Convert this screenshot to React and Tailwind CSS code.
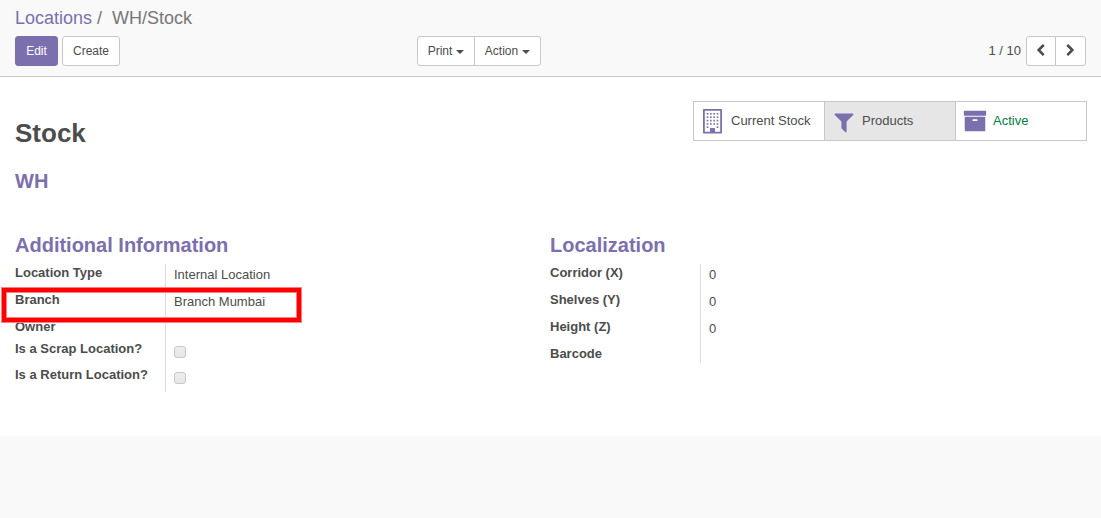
import React from "react";

const PATHS = {
  left: "M1427 301l-531 531 531 531q19 19 19 45t-19 45l-166 166q-19 19-45 19t-45-19l-742-742q-19-19-19-45t19-45l742-742q19-19 45-19t45 19l166 166q19 19 19 45t-19 45z",
  right: "M1363 877l-742 742q-19 19-45 19t-45-19l-166-166q-19-19-19-45t19-45l531-531-531-531q-19-19-19-45t19-45l166-166q19-19 45-19t45 19l742 742q19 19 19 45t-19 45z",
  filter: "M1595 295q17 41-14 70l-493 493v742q0 42-39 59-13 5-25 5-27 0-45-19l-256-256q-19-19-19-45v-486l-493-493q-31-29-14-70 17-39 59-39h1280q42 0 59 39z",
  archive: "M1088 832q0-26-19-45t-45-19h-256q-26 0-45 19t-19 45 19 45 45 19h256q26 0 45-19t19-45zm576-192v960q0 26-19 45t-45 19h-1408q-26 0-45-19t-19-45v-960q0-26 19-45t45-19h1408q26 0 45 19t19 45zm64-448v256q0 26-19 45t-45 19h-1536q-26 0-45-19t-19-45v-256q0-26 19-45t45-19h1536q26 0 45 19t19 45z",
};

const WINDOW_ROWS = [4, 7.4, 10.8, 14.2];
const WINDOW_COLUMNS = [4.5, 7.8, 11.2, 14.5];

function Icon({ name, className }) {
  return (
    <svg viewBox="0 0 1792 1792" className={className} fill="currentColor">
      <path d={PATHS[name]} />
    </svg>
  );
}

function Pane({ x, y }) {
  return <rect x={x - 0.85} y={y} width="1.7" height="1.6" />;
}

function Building() {
  return (
    <svg viewBox="0 0 19 25" className="h-[25px] w-[19px]" fill="currentColor">
      <path fillRule="evenodd" d="M.8 0h17.4q.8 0 .8.8v23q0 .8-.8.8H.8q-.8 0-.8-.8V.8Q0 0 .8 0zM1.8 1.8v21H7v-3.1q0-.5.5-.5h4q.5 0 .5.5v3.1h5.2v-21z" />
      <path d="M7 19.2h5v4H7z" />
      {WINDOW_ROWS.map((y) => WINDOW_COLUMNS.map((x) => <Pane key={`${x}-${y}`} x={x} y={y} />))}
      <Pane x={4.5} y={17.4} />
      <Pane x={14.5} y={17.4} />
    </svg>
  );
}

const Caret = () => (
  <span className="ml-1 inline-block border-x-4 border-t-4 border-x-transparent border-t-[#4c4c4c] align-middle" />
);

function StatButton({ icon, label, className }) {
  return (
    <div className={`flex h-[38px] items-center pl-[9px] ${className}`}>
      <span className="flex w-[28px] items-center text-[#7c6fad]">{icon}</span>
      <span>{label}</span>
    </div>
  );
}

function Row({ label, height, children }) {
  return (
    <div className={`flex ${height}`}>
      <div className="w-[150px] font-bold leading-[17px] whitespace-nowrap">{label}</div>
      <div className="border-l border-[#ddd] pl-2 pt-px leading-[19px]">{children}</div>
    </div>
  );
}

const Check = () => (
  <span className="mt-[5px] block size-3 rounded-[3px] border border-[#c8c8c8] bg-linear-to-b from-[#eeeeee] to-[#e6e6e6]" />
);

const Heading = ({ children }) => (
  <h2 className="h-[30px] text-[20px] leading-[22px] font-bold text-[#7c6fad]">{children}</h2>
);

export default function App() {
  return (
    <div className="min-h-screen bg-[#f9f9f9] font-['Liberation_Sans',Arial,sans-serif] text-[13px] text-[#4c4c4c]">
      <header className="h-[77px] border-b border-[#c8c8c8] px-[15px] pt-[7px]">
        <div className="h-[29px] text-[18px] leading-[22px] whitespace-pre text-[#777]">
          <span className="text-[#7c6fad]">Locations</span>
          <span className="ml-[5px]">/</span>
          <span className="ml-[10px]">WH/Stock</span>
        </div>
        <div className="flex h-[30px] text-[12px]">
          <div className="flex w-[402px] gap-1">
            <button className="h-[30px] w-[43px] rounded-[3px] border border-[#7c6fad] bg-[#7c6fad] text-white">Edit</button>
            <button className="h-[30px] w-[58px] rounded-[3px] border border-[#c8c8c8] bg-white">Create</button>
          </div>
          <div className="flex h-[30px] w-[124px] rounded-[3px] border border-[#c8c8c8] bg-white">
            <button className="w-[57px] border-r border-[#c8c8c8]">Print<Caret /></button>
            <button className="flex-1">Action<Caret /></button>
          </div>
          <div className="ml-auto flex items-center">
            <span className="mr-[5px] text-[13px]">1 / 10</span>
            <div className="flex h-[30px] w-[60px] rounded-[3px] border border-[#c8c8c8] bg-white">
              <button className="flex w-[29px] items-center justify-center border-r border-[#c8c8c8] pr-px pb-px"><Icon name="left" className="size-[13px]" /></button>
              <button className="flex flex-1 items-center justify-center pb-px"><Icon name="right" className="size-[13px]" /></button>
            </div>
          </div>
        </div>
      </header>

      <main className="h-[359px] bg-white pr-[14px] pl-[15px] pt-6">
        <div className="flex h-[133px] justify-between">
          <div>
            <h1 className="pt-[17px] text-[26px] leading-[30px] font-bold">Stock</h1>
            <h2 className="pt-[22px] text-[20px] leading-[22px] font-bold text-[#7c6fad]">WH</h2>
          </div>
          <div className="flex h-10 w-[394px] border border-[#c8c8c8]">
            <StatButton icon={<Building />} label="Current Stock" className="w-[131px] border-r border-[#c8c8c8]" />
            <StatButton icon={<Icon name="filter" className="mt-px -ml-[2.5px] size-6" />} label="Products" className="w-[131px] border-r border-[#c8c8c8] bg-[#e6e6e6]" />
            <StatButton icon={<Icon name="archive" className="-ml-[2.5px] size-6" />} label="Active" className="w-[130px] text-[#008040]" />
          </div>
        </div>
        <div className="grid grid-cols-[535px_1fr]">
          <section className="relative">
            <Heading>Additional Information</Heading>
            <Row label="Location Type" height="h-[27px]">Internal Location</Row>
            <Row label="Branch" height="h-[27px]">Branch Mumbai</Row>
            <Row label="Owner" height="h-[22px]" />
            <Row label="Is a Scrap Location?" height="h-[26px]"><Check /></Row>
            <Row label="Is a Return Location?" height="h-[26px]"><Check /></Row>
            <div className="absolute top-[53px] -left-[14px] h-[36px] w-[301px] border border-[#ff8080]">
              <div className="size-full border-4 border-[#f00]">
                <div className="size-full border border-[#ff8080]" />
              </div>
            </div>
          </section>
          <section>
            <Heading>Localization</Heading>
            <Row label="Corridor (X)" height="h-[27px]">0</Row>
            <Row label="Shelves (Y)" height="h-[27px]">0</Row>
            <Row label="Height (Z)" height="h-[27px]">0</Row>
            <Row label="Barcode" height="h-[18px]" />
          </section>
        </div>
      </main>
    </div>
  );
}
